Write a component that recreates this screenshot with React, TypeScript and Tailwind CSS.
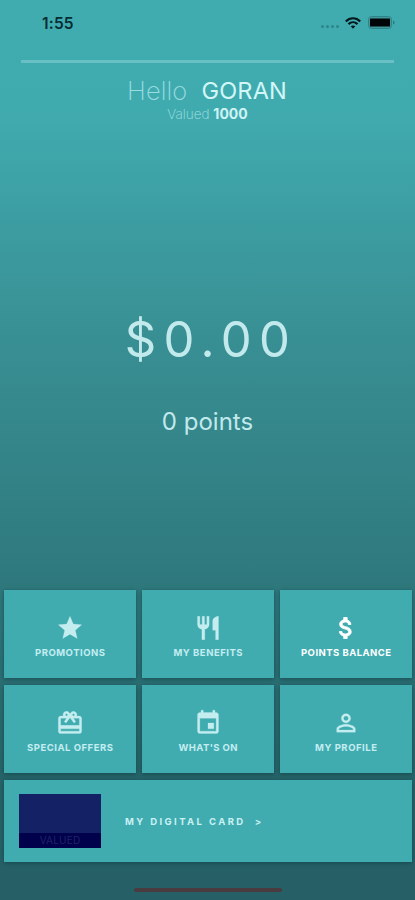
import React from "react";
import { IconType } from "react-icons";
import {
  MdStar,
  MdRestaurant,
  MdAttachMoney,
  MdCardGiftcard,
  MdEvent,
  MdPersonOutline,
} from "react-icons/md";

type Tile = { label: string; icon: IconType; active?: boolean; width: string };

const tiles: Tile[] = [
  { label: "PROMOTIONS", icon: MdStar, width: "70" },
  { label: "MY BENEFITS", icon: MdRestaurant, width: "69" },
  { label: "POINTS BALANCE", icon: MdAttachMoney, active: true, width: "90" },
  { label: "SPECIAL OFFERS", icon: MdCardGiftcard, width: "86" },
  { label: "WHAT'S ON", icon: MdEvent, width: "59" },
  { label: "MY PROFILE", icon: MdPersonOutline, width: "62" },
];

const StatusBar: React.FC = () => (
  <div className="flex h-[60px] items-start justify-between pl-[42px] pr-[20px] pt-[15px] text-[#062b33]">
    <span className="text-[15.5px] font-semibold leading-[17px] tracking-[0.2px]">1:55</span>
    <div className="flex items-center pt-px">
      <div className="mr-[6px] mt-[8px] flex gap-[2px]">
        {[0, 1, 2, 3].map((dot) => (
          <span key={dot} className="h-[3px] w-[3px] rounded-full bg-[#2c858a]" />
        ))}
      </div>
      <svg className="mr-[7px] h-[12px] w-[16px]" viewBox="0 0 16 12" fill="none" stroke="#03171c" strokeWidth="2.2">
        <path d="M.8 4.4C4.9.2 11.1.2 15.2 4.4" />
        <path d="M3.5 7.1c2.6-2.5 6.4-2.5 9 0" />
        <path d="M5.7 9.3c1.3-1.2 3.3-1.2 4.6 0L8 11.8z" fill="#03171c" stroke="none" />
      </svg>
      <svg className="h-[13px] w-[27px]" viewBox="0 0 27 13">
        <rect x=".5" y=".5" width="23" height="12" rx="3" fill="#41999d" stroke="#2e8589" />
        <rect x="2" y="2.5" width="20" height="8" rx=".5" fill="#000608" />
        <path d="M25 4.5v4c2-.6 2-3.4 0-4z" fill="#287a80" />
      </svg>
    </div>
  </div>
);

const MenuTile: React.FC<{ tile: Tile }> = ({ tile }) => {
  const Icon = tile.icon;
  return (
    <button
      className={`flex flex-col items-center bg-[#40acb0] pr-px pt-[24px] shadow-[0_1px_4px_rgba(10,55,60,0.6)] ${
        tile.active ? "text-white" : "text-[#c4edf0]"
      }`}
    >
      {/* the icons carry an unfilled bounding path that must not be stroked */}
      <Icon
        size={28}
        className={`stroke-current [&>path[fill=none]]:stroke-none ${
          tile.active ? "stroke-[0.7]" : "stroke-[0.2]"
        }`}
      />
      <svg className="mt-[5px] h-[12px] w-[120px]" viewBox="0 0 120 12">
        <text
          x="60"
          y="9.2"
          textAnchor="middle"
          textLength={tile.width}
          fill="currentColor"
          className="text-[9.5px] font-bold"
        >
          {tile.label}
        </text>
      </svg>
    </button>
  );
};

const App: React.FC = () => {
  return (
    <div className="flex h-[900px] w-[415px] flex-col overflow-hidden bg-[linear-gradient(to_bottom,#40acb0_0px,#40abaf_110px,#388f93_340px,#2e787c_590px,#266469_780px,#265f66_900px)] font-['Inter',sans-serif]">
      <StatusBar />
      <div className="mx-[21px] h-[3px] bg-[#68c0c5]" />

      <header className="flex h-[527px] flex-col items-center text-[#c2e9ec]">
        <h1 className="mt-[13px] flex items-center pr-px leading-[30px]">
          <span className="mr-[14px] text-[25.5px] font-extralight tracking-[0.1px] text-[#9bdce0]">Hello</span>
          <span className="text-[23.5px] tracking-[0.2px] text-[#d3f6f8]">GORAN</span>
        </h1>
        <p className="-mt-px text-[14px] leading-[18px]">
          <span className="text-[13.5px] font-extralight text-[#a7e0e3]">Valued</span>{" "}
          <b className="font-bold text-[#d0f3f5]">1000</b>
        </p>
        <p className="mt-[187px] pl-[7px] text-[49px] leading-[60px] tracking-[7.3px]">$0.00</p>
        <p className="mt-[37px] text-[24px] leading-[30px]">0 points</p>
      </header>

      <nav className="ml-[4px] grid w-[408px] grid-cols-3 grid-rows-[88px_88px] gap-x-[6px] gap-y-[7px]">
        {tiles.map((tile) => (
          <MenuTile key={tile.label} tile={tile} />
        ))}
      </nav>

      <button className="ml-[4px] mt-[7px] flex h-[82px] w-[408px] shrink-0 items-center bg-[#40acb0] pl-[15px] shadow-[0_1px_4px_rgba(10,55,60,0.6)]">
        <span className="flex h-[54px] w-[82px] flex-col justify-end bg-[#142164]">
          <span className="h-[15px] bg-[#00004b] text-center text-[10px] leading-[15px] tracking-[0.2px] text-[#202267]">
            VALUED
          </span>
        </span>
        <span className="ml-[24px] mt-[2px] whitespace-pre text-[9.5px] font-bold tracking-[2.4px] text-[#cbf1f3]">
          {"MY DIGITAL CARD  >"}
        </span>
      </button>

      <div className="mx-auto mt-[26px] h-[4px] w-[148px] shrink-0 rounded-full bg-[#493b40]" />
    </div>
  );
};

export default App;
